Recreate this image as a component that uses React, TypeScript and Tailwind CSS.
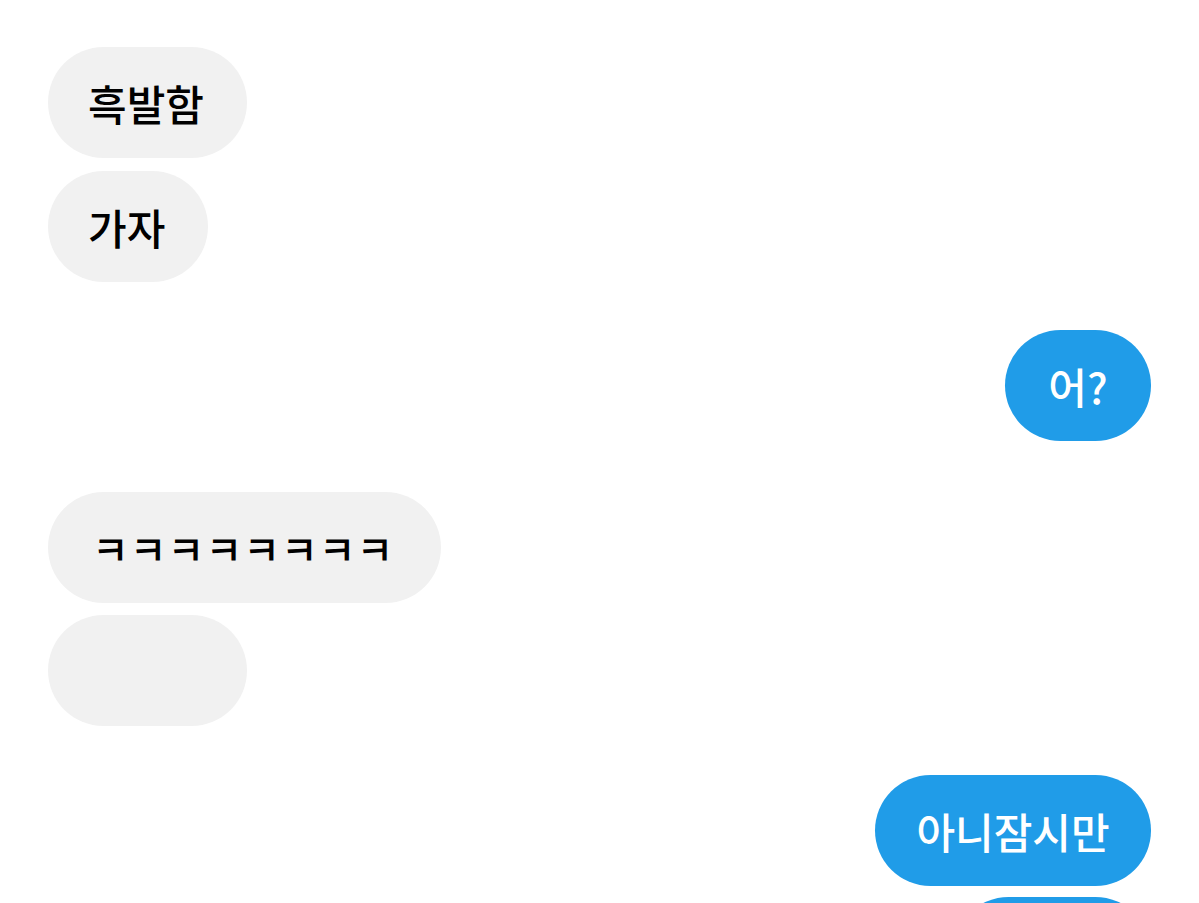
import React from "react";

const font = { fontFamily: '"Noto Sans CJK KR", "Noto Sans", sans-serif' };

export default function App() {
  return (
    <div className="w-[1199px] h-[903px] overflow-hidden bg-white" style={font}>
      <div className="flex flex-col px-[48px] pt-[47px]">
        <div className="flex justify-start">
          <div className="w-[199px] h-[111px] rounded-full bg-[#f1f1f1] flex items-center pl-[40px] text-[42px] font-medium text-black leading-none">
            흑발함
          </div>
        </div>
        <div className="flex justify-start mt-[13px]">
          <div className="w-[160px] h-[111px] rounded-full bg-[#f1f1f1] flex items-center pl-[40px] text-[42px] font-medium text-black leading-none">
            가자
          </div>
        </div>
        <div className="flex justify-end mt-[48px]">
          <div className="w-[146px] h-[111px] rounded-full bg-[#209ce8] flex items-center justify-center text-[42px] font-medium text-white leading-none">
            어?
          </div>
        </div>
        <div className="flex justify-start mt-[51px]">
          <div className="w-[393px] h-[111px] rounded-full bg-[#f1f1f1] flex items-center pl-[44px] text-[40px] font-medium text-black leading-none tracking-[1px]">
            ㅋㅋㅋㅋㅋㅋㅋㅋ
          </div>
        </div>
        <div className="flex justify-start mt-[12px]">
          <div className="w-[199px] h-[111px] rounded-full bg-[#f1f1f1]" />
        </div>
        <div className="flex justify-end mt-[49px]">
          <div className="w-[276px] h-[111px] rounded-full bg-[#209ce8] flex items-center justify-center text-[42px] font-medium text-white leading-none">
            아니잠시만
          </div>
        </div>
        <div className="flex justify-end mt-[11px]">
          <div className="w-[198px] h-[111px] rounded-full bg-[#209ce8]" />
        </div>
      </div>
    </div>
  );
}
